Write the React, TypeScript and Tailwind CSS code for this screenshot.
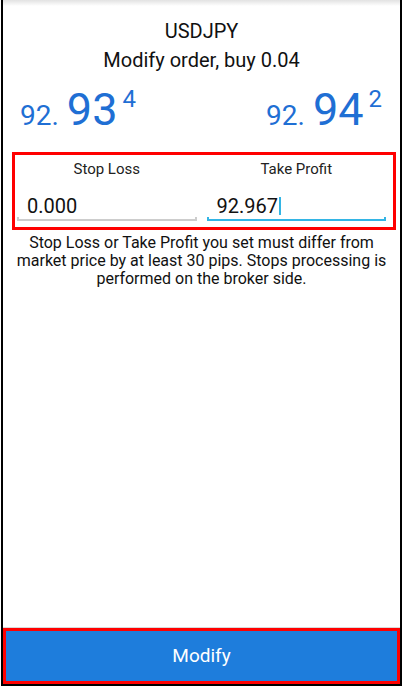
import { useState } from "react";

const Price = ({ head, big, tail }: { head: string; big: string; tail: string }) => (
  <div className="flex items-start text-[#1f6fd4] leading-none">
    <div className="flex items-baseline">
      <span className="text-[28px]">{head}</span>
      <span className="text-[45px] ml-[8px]">{big}</span>
    </div>
    <span className="text-[24px] ml-[5px]">{tail}</span>
  </div>
);

export default function App() {
  const [stopLoss, setStopLoss] = useState("0.000");
  const [takeProfit, setTakeProfit] = useState("92.967");

  return (
    <div className="w-[404px] h-[686px] bg-white font-['Roboto',sans-serif]">
      <div className="h-full ml-px mr-[2px] flex flex-col border-x-2 border-b-2 border-black">
        {/* status shadow */}
        <div className="h-[6px] shrink-0 bg-gradient-to-b from-[#e2e2e2] to-white" />

        <div className="flex-1 flex flex-col">
          <div className="mt-[13px] text-center text-[20px] leading-[24px] text-[#111]">USDJPY</div>
          <div className="mt-[5px] text-center text-[20px] leading-[24px] text-[#111]">
            Modify order, buy 0.04
          </div>

          {/* bid / ask */}
          <div className="mt-[15px] flex justify-between pl-[17px] pr-[18px]">
            <Price head="92." big="93" tail="4" />
            <Price head="92." big="94" tail="2" />
          </div>

          {/* stops box */}
          <div className="mt-[20px] ml-[9px] mr-[4px] border-[3px] border-[#ff0000] grid grid-cols-2 gap-[10px] pl-[2px] pr-[7px] pt-[4px] pb-[6px]">
            <div className="flex flex-col">
              <div className="text-center text-[15px] leading-[20px] text-[#222]">Stop Loss</div>
              <div className="relative mt-[15px] h-[27px] pl-[10px]">
                <input
                  value={stopLoss}
                  onChange={(e) => setStopLoss(e.target.value)}
                  className="block w-full h-[24px] leading-[24px] bg-transparent outline-none text-[20px] text-[#111]"
                />
                <div className="absolute left-0 right-0 bottom-0 h-[4px] border-x-2 border-b-2 border-[#cdcdcd]" />
              </div>
            </div>
            <div className="flex flex-col">
              <div className="text-center text-[15px] leading-[20px] text-[#222]">Take Profit</div>
              <div className="relative mt-[15px] h-[27px] pl-[10px] flex items-start">
                <span className="text-[20px] leading-[24px] text-[#111]">{takeProfit}</span>
                <span className="mt-[3px] ml-px w-[2px] h-[18px] bg-[#33b5e5]" />
                <input
                  value={takeProfit}
                  onChange={(e) => setTakeProfit(e.target.value)}
                  className="absolute inset-0 opacity-0"
                />
                <div className="absolute left-0 right-0 bottom-0 h-[4px] border-x-2 border-b-2 border-[#33b5e5]" />
              </div>
            </div>
          </div>

          <p className="mt-[4px] px-[8px] text-center text-[16px] leading-[18px] text-[#111]">
            Stop Loss or Take Profit you set must differ from market price by at least 30 pips. Stops processing is
            performed on the broker side.
          </p>
        </div>

        <div className="h-px shrink-0 bg-[#d8d8d8]" />
        <button className="shrink-0 h-[56px] border-[3px] border-[#ff0000] bg-[#1e7ddc] text-white text-[19px]">
          Modify
        </button>
      </div>
    </div>
  );
}
